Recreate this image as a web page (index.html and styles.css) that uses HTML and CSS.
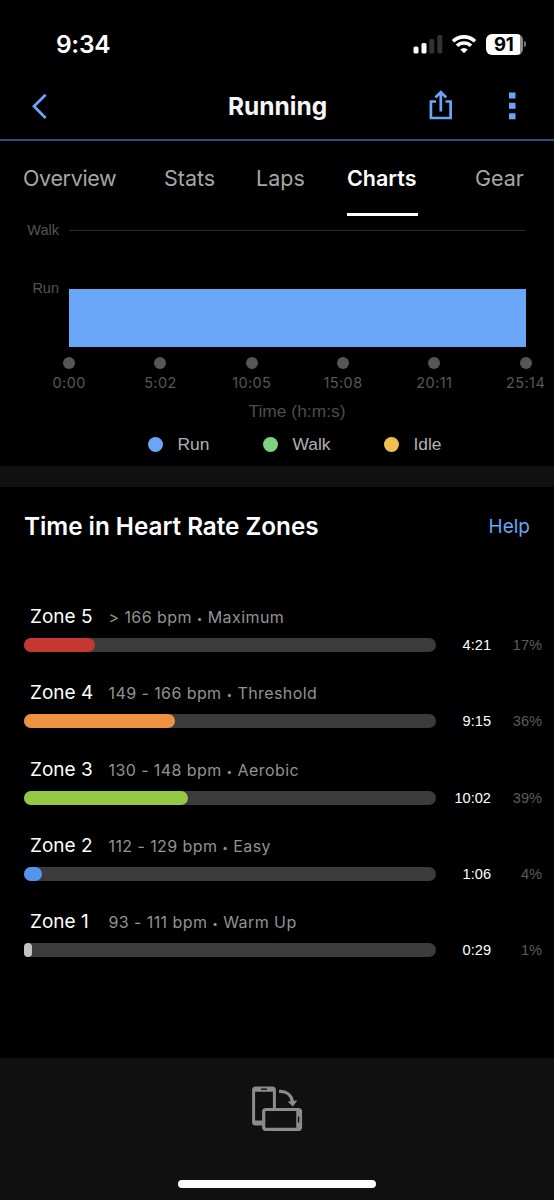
FILE: index.html
```
<!DOCTYPE html>
<html lang="en">
<head>
  <meta charset="UTF-8" />
  <meta name="viewport" content="width=device-width, initial-scale=1.0"/>
  <title>Running</title>
  <link rel="stylesheet" href="styles.css">
</head>
<body>

<div class="statusbar">
  <span class="clock">9:34</span>
  <div class="status-icons">
    <svg class="signal" width="30" height="20" viewBox="0 0 30 20">
      <rect x="0.5" y="12.5" width="5" height="7" rx="1.6" fill="#fff"/>
      <rect x="8.5" y="9" width="5" height="10.5" rx="1.6" fill="#fff"/>
      <rect x="16.3" y="5" width="5" height="14.5" rx="1.6" fill="#333"/>
      <rect x="24.3" y="1" width="5" height="18.5" rx="1.6" fill="#333"/>
    </svg>
    <svg class="wifi" width="26" height="20" viewBox="0 0 26 20" fill="none" stroke="#fff" stroke-width="3.6">
      <path d="M2 7.300a16 16 0 0 1 22 0"/>
      <path d="M6 11.800a10 10 0 0 1 14 0"/>
      <path d="M13 19.200l-3.700-3.800a5.300 5.300 0 0 1 7.400 0z" fill="#fff" stroke="none"/>
    </svg>
    <div class="battery"><span>91</span></div>
    <div class="battery-tip"></div>
  </div>
</div>

<div class="navbar">
  <svg width="16" height="26" viewBox="0 0 16 26" fill="none" stroke="#6aa6f8" stroke-width="2.7">
    <path d="M14.600 1.700L3 13.300L14.600 25"/>
  </svg>
  <h1>Running</h1>
  <svg class="share" width="26" height="32" viewBox="0 0 26 32" fill="none" stroke="#6aa6f8" stroke-width="2.7">
    <path d="M8 11.500H2.900V28H22.600V11.500H17.500"/>
    <path d="M12.800 21.500V2.500M7.400 7.500L12.800 2.100L18.200 7.500"/>
  </svg>
  <svg class="more" width="7" height="28" viewBox="0 0 7 28" fill="#6aa6f8">
    <rect y="0.500" width="6.500" height="6"/>
    <rect y="10.800" width="6.500" height="6"/>
    <rect y="21.300" width="6.500" height="6"/>
  </svg>
</div>

<div class="tabs">
  <a class="tab overview">Overview</a>
  <a class="tab">Stats</a>
  <a class="tab">Laps</a>
  <a class="tab active">Charts</a>
  <a class="tab">Gear</a>
</div>

<div class="chart">
  <div class="plot-row walk-row"><span class="ylabel">Walk</span><div class="gridline"></div></div>
  <div class="plot-row run-row"><span class="ylabel">Run</span><div class="run-bar"></div></div>
  <div class="xaxis">
    <div class="tick"><i></i>0:00</div>
    <div class="tick"><i></i>5:02</div>
    <div class="tick"><i></i>10:05</div>
    <div class="tick"><i></i>15:08</div>
    <div class="tick"><i></i>20:11</div>
    <div class="tick"><i></i>25:14</div>
  </div>
  <p class="xtitle">Time (h:m:s)</p>
  <div class="legend">
    <span><i class="dot-run"></i>Run</span>
    <span><i class="dot-walk"></i>Walk</span>
    <span><i class="dot-idle"></i>Idle</span>
  </div>
</div>

<div class="zones">
  <div class="zones-head">
    <h2>Time in Heart Rate Zones</h2>
    <a class="help">Help</a>
  </div>

  <div class="zone">
    <p><b>Zone 5</b><span>&gt; 166 bpm <i>•</i> Maximum</span></p>
    <div class="zone-row"><div class="track"><div class="fill max" style="width: 17.3%"></div></div><span class="time">4:21</span><span class="pct">17%</span></div>
  </div>
  <div class="zone">
    <p><b>Zone 4</b><span>149 - 166 bpm <i>•</i> Threshold</span></p>
    <div class="zone-row"><div class="track"><div class="fill threshold" style="width: 36.7%"></div></div><span class="time">9:15</span><span class="pct">36%</span></div>
  </div>
  <div class="zone">
    <p><b>Zone 3</b><span>130 - 148 bpm <i>•</i> Aerobic</span></p>
    <div class="zone-row"><div class="track"><div class="fill aerobic" style="width: 39.8%"></div></div><span class="time">10:02</span><span class="pct">39%</span></div>
  </div>
  <div class="zone">
    <p><b>Zone 2</b><span>112 - 129 bpm <i>•</i> Easy</span></p>
    <div class="zone-row"><div class="track"><div class="fill easy" style="width: 4.4%"></div></div><span class="time">1:06</span><span class="pct">4%</span></div>
  </div>
  <div class="zone">
    <p><b>Zone 1</b><span>93 - 111 bpm <i>•</i> Warm Up</span></p>
    <div class="zone-row"><div class="track"><div class="fill warmup" style="width: 2%"></div></div><span class="time">0:29</span><span class="pct">1%</span></div>
  </div>
</div>

<div class="footer">
  <svg width="52" height="46" viewBox="0 0 52 46" fill="none" stroke="#8c8c8c">
    <rect x="2.600" y="2" width="20.800" height="36" rx="2" stroke-width="3"/>
    <path d="M2 4H24M2 36.300H12" stroke-width="3.500"/>
    <path d="M10 3.200H16" stroke="#111" stroke-width="1.400"/>
    <rect x="12.700" y="23.500" width="36.800" height="19.800" rx="2" fill="#111" stroke-width="3.200"/>
    <path d="M47.500 24V43" stroke-width="4.500"/>
    <path d="M47.600 30.500V36.500" stroke="#111" stroke-width="1.400"/>
    <path d="M28 5.500C35.500 5 40.500 9 41.500 16" stroke-width="3.200"/>
    <path d="M36.700 15.500L46.400 14.500L41.800 20.500Z" fill="#8c8c8c" stroke="none"/>
  </svg>
  <div class="home-bar"></div>
</div>

</body>
</html>
```
FILE: styles.css
```
* {
  box-sizing: border-box;
}

body {
  margin: 0;
  width: 554px;
  height: 1200px;
  overflow: hidden;
  background-color: #000;
  color: #fff;
  font-family: Inter, 'Liberation Sans', sans-serif;
}

h1, h2, p {
  margin: 0;
}

.statusbar {
  display: flex;
  justify-content: space-between;
  align-items: center;
  height: 73px;
  padding: 15px 28px 0 56px;
}

.clock {
  font-size: 24.5px;
  font-weight: 600;
  letter-spacing: -0.3px;
}

.status-icons {
  display: flex;
  align-items: center;
}

.wifi {
  margin-left: 8px;
}

.battery {
  width: 37px;
  height: 21px;
  margin-left: 9px;
  border-radius: 6px;
  background: linear-gradient(to right, #fff 34px, #8c8c8c 34px);
  color: #000;
  font-size: 18.5px;
  font-weight: 700;
  line-height: 21px;
  padding-left: 8px;
  letter-spacing: -0.3px;
}

.battery-tip {
  width: 2px;
  height: 6px;
  margin-left: 1px;
  border-radius: 0 3px 3px 0;
  background-color: #777;
}

.navbar {
  display: grid;
  grid-template-columns: 197px 200px 81px 7px;
  align-items: center;
  height: 68px;
  padding-left: 31px;
  border-bottom: 2px solid #314f83;
}

.navbar h1 {
  font-size: 24.5px;
  font-weight: 650;
  color: #f5f5f5;
  letter-spacing: 0;
}

.tabs {
  display: grid;
  grid-template-columns: 141px 92px 91px 128px 60px;
  justify-items: start;
  height: 75px;
  padding-left: 23px;
}

.tab {
  height: 75px;
  line-height: 74px;
  font-size: 21.5px;
  color: #a6a6a6;
  border-bottom: 3px solid transparent;
}

.tab.overview {
  letter-spacing: -0.35px;
}

.tab.active {
  width: 71px;
  color: #fff;
  font-weight: 600;
  border-color: #fff;
}

.chart {
  height: 271px;
  border-bottom: 21px solid #101010;
  font-family: 'Liberation Sans', sans-serif;
}

.plot-row {
  display: grid;
  grid-template-columns: 59px 457px;
  column-gap: 10px;
}

.walk-row {
  height: 59px;
  padding-top: 6px;
}

.run-row {
  height: 73px;
  padding-top: 5px;
}

.ylabel {
  text-align: right;
  font-size: 14.5px;
  line-height: 16px;
  color: #555;
}

.gridline {
  height: 1px;
  margin-top: 8px;
  background-color: #2b2b2b;
}

.run-bar {
  height: 58px;
  margin-top: 9px;
  background-color: #6aa6f8;
}

.xaxis {
  display: grid;
  grid-template-columns: repeat(6, 91.3px);
  height: 53px;
  padding: 9px 0 0 23.5px;
}

.tick {
  display: flex;
  flex-direction: column;
  align-items: center;
  gap: 4px;
  font-family: Inter, sans-serif;
  font-size: 14.5px;
  line-height: 19px;
  letter-spacing: 0.4px;
  color: #575757;
}

.tick i {
  width: 12px;
  height: 12px;
  border-radius: 50%;
  background-color: #565656;
}

.xtitle {
  padding-left: 40px;
  text-align: center;
  font-size: 17.4px;
  line-height: 20px;
  color: #4d4d4d;
}

.legend {
  display: grid;
  grid-template-columns: 115px 121px 80px;
  padding: 13px 0 0 147.5px;
  font-size: 17.4px;
  line-height: 20px;
  color: #b0b0b0;
}

.legend span {
  display: flex;
  align-items: center;
  gap: 15px;
}

.legend i {
  width: 15px;
  height: 15px;
  border-radius: 50%;
}

.dot-run { background-color: #6aa6f8; }
.dot-walk { background-color: #7fd27f; }
.dot-idle { background-color: #efc050; }

.zones {
  height: 571px;
}

.zones-head {
  display: flex;
  justify-content: space-between;
  align-items: center;
  height: 78px;
  padding: 0 24px;
}

.zones-head h2 {
  font-size: 24.3px;
  font-weight: 600;
  letter-spacing: -0.03px;
}

.help {
  font-size: 19px;
  color: #6aa6f8;
}

.zone {
  height: 76.3px;
  padding: 0 12px 0 24px;
}

.zones-head + .zone {
  height: 117.3px;
  padding-top: 41px;
}

.zone p {
  display: flex;
  align-items: baseline;
  height: 31px;
  line-height: 22px;
  padding-left: 6px;
}

.zone b {
  width: 78.5px;
  font-size: 19px;
  font-weight: 400;
}

.zone p span {
  font-size: 16px;
  letter-spacing: 0.42px;
  color: #929292;
}

.zone p i {
  font-size: 10px;
  font-style: normal;
  vertical-align: 1px;
}

.zone-row {
  display: grid;
  grid-template-columns: 412px 55px 51px;
  align-items: center;
  height: 14px;
  font-family: 'Liberation Sans', sans-serif;
  font-size: 14.6px;
  text-align: right;
}

.track {
  height: 14px;
  border-radius: 7px;
  background-color: #3b3b3b;
}

.fill {
  height: 14px;
  border-radius: 7px;
}

.max { background-color: #c43831; }
.threshold { background-color: #ec9240; }
.aerobic { background-color: #94c945; }
.easy { background-color: #5496ed; }
.warmup { background-color: #c2c2c2; }

.pct {
  color: #5d5d5d;
}

.footer {
  display: flex;
  flex-direction: column;
  align-items: center;
  justify-content: space-between;
  height: 142px;
  padding: 28px 0 12px;
  background-color: #101010;
}

.home-bar {
  width: 198px;
  height: 8px;
  border-radius: 4px;
  background-color: #fff;
}
```
